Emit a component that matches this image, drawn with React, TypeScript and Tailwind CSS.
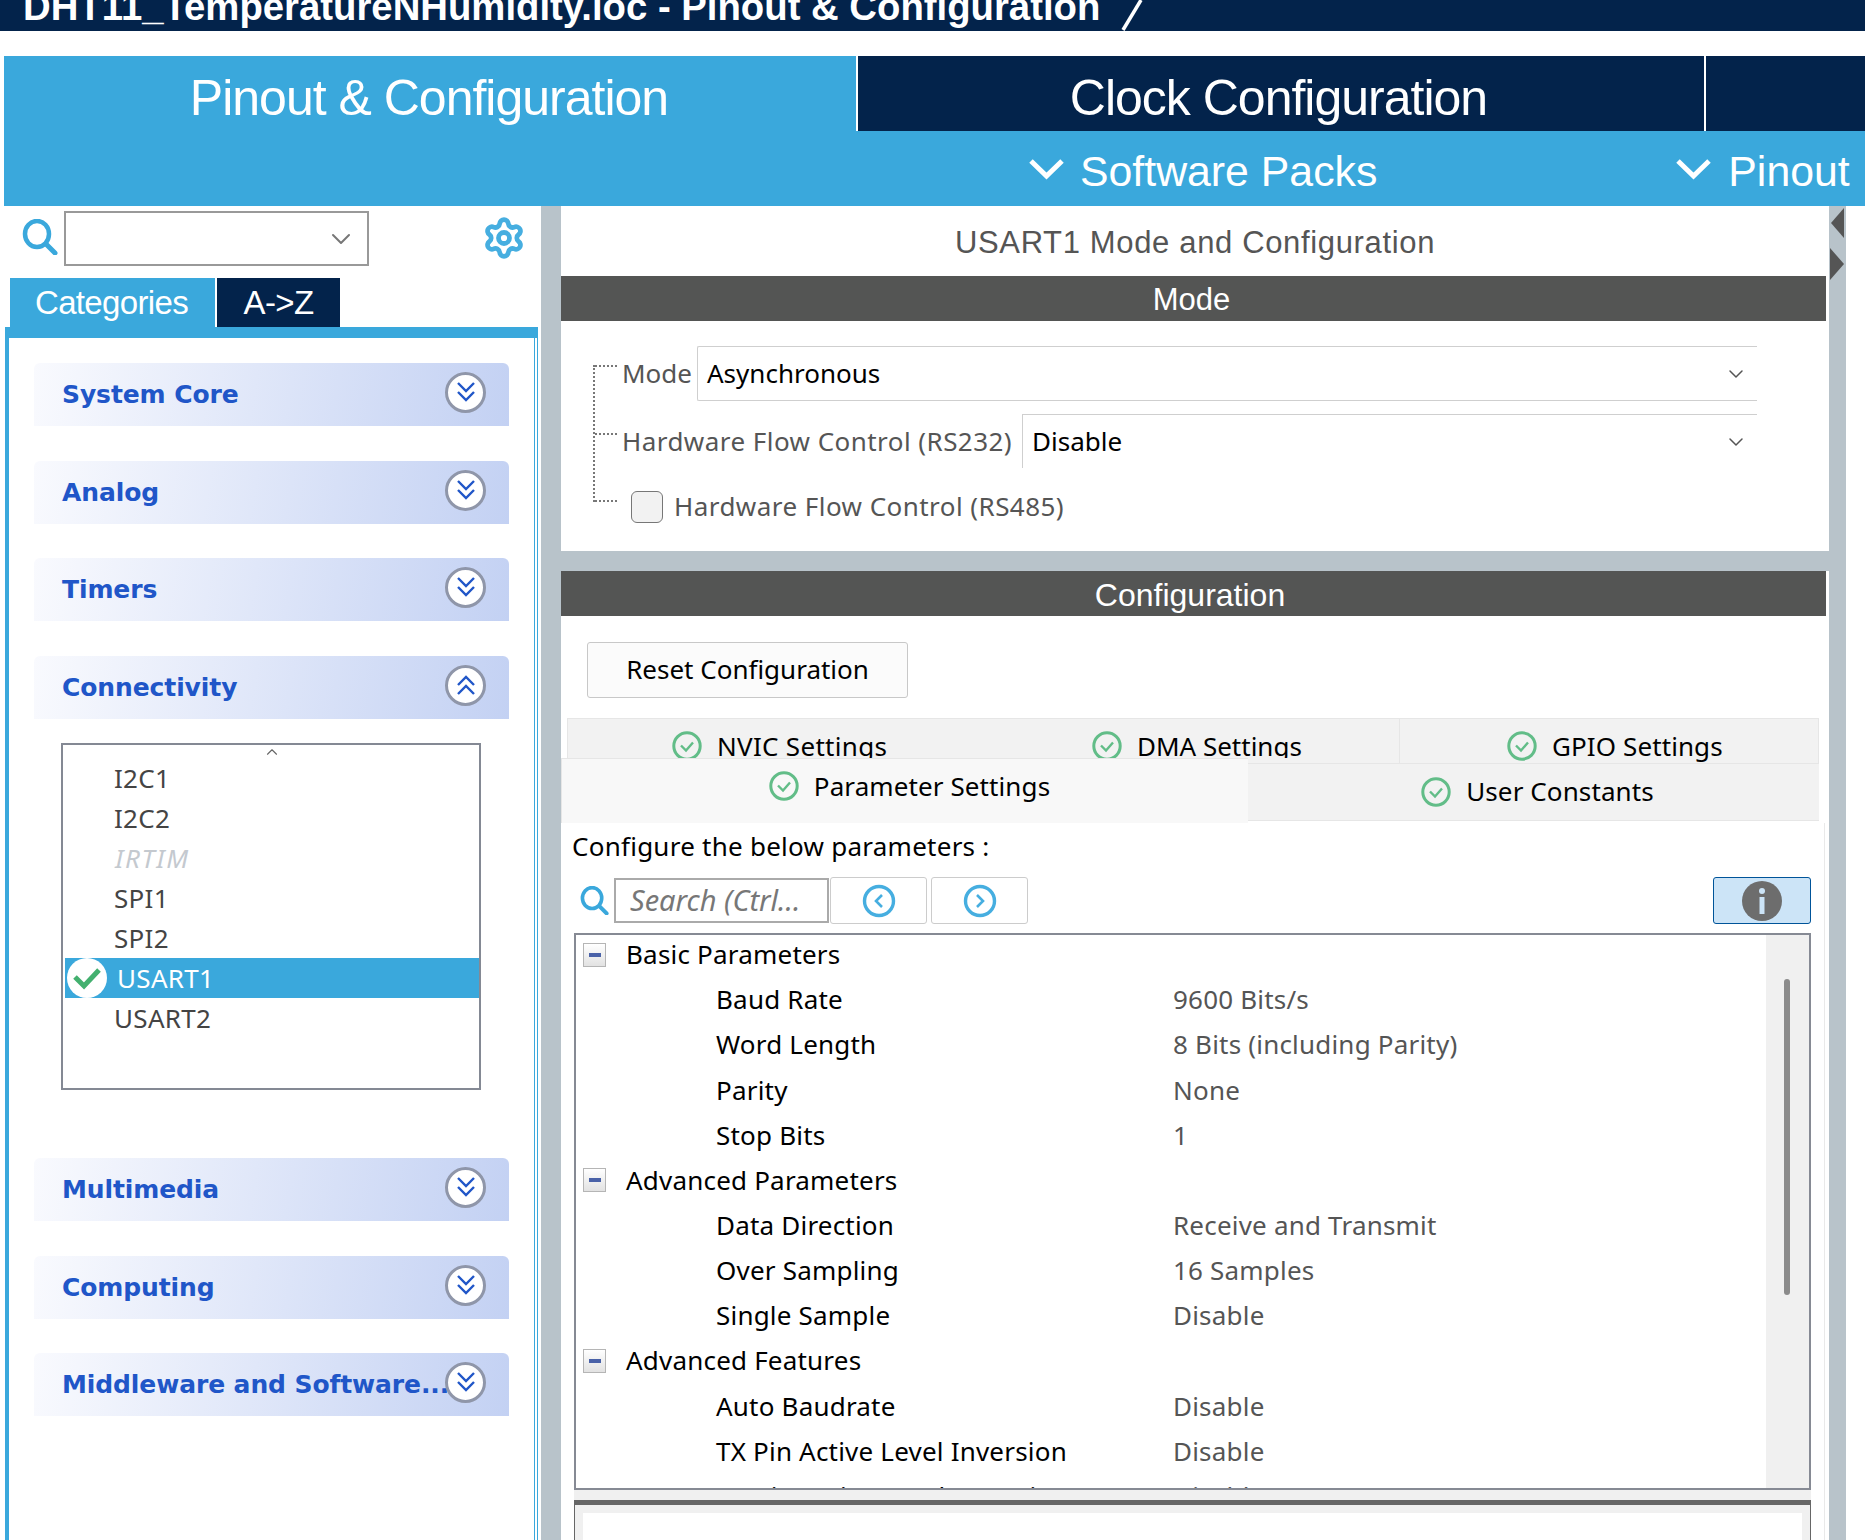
import React from 'react';
import { ChevronDown, ChevronUp, Settings } from 'lucide-react';

const uiFont = "font-['Noto_Sans','DejaVu_Sans',sans-serif]";

const SearchIcon: React.FC<{ size: number }> = ({ size }) => (
  <svg width={size} height={size} viewBox="0 0 36 36" fill="none" stroke="#3aa8dc" className="shrink-0">
    <ellipse cx="15" cy="15" rx="12" ry="13" strokeWidth="4.5" />
    <path d="M24 25l9 9" strokeWidth="5" strokeLinecap="round" />
  </svg>
);

const WideChevron: React.FC<{ className?: string }> = ({ className }) => (
  <svg width="35" height="22" viewBox="0 0 35 22" fill="none" stroke="#fff" strokeWidth="5" className={`shrink-0 ${className ?? ''}`}>
    <path d="M2 3l15.5 15L33 3" />
  </svg>
);

const DoubleChevron: React.FC<{ up?: boolean }> = ({ up }) => (
  <div className="relative -mt-[5px] w-[41px] h-[41px] rounded-full bg-white border-[3px] border-[#8f96a9] flex items-center justify-center shrink-0">
    <svg width="20" height="22" viewBox="0 0 20 22" fill="none" stroke="#2056c8" strokeWidth="2.4" className={up ? 'rotate-180' : ''}>
      <path d="M2 2l8 8 8-8" />
      <path d="M2 11l8 8 8-8" />
    </svg>
  </div>
);

const CheckCircle: React.FC = () => (
  <svg width="30" height="30" viewBox="0 0 30 30" fill="none" className="shrink-0">
    <circle cx="15" cy="15" r="13.2" stroke="#62bd88" strokeWidth="3" />
    <path d="M9 14.5l5 5 7-8" stroke="#62bd88" strokeWidth="2.4" />
  </svg>
);

const NavCircle: React.FC<{ right?: boolean }> = ({ right }) => (
  <svg width="34" height="34" viewBox="0 0 34 34" fill="none" stroke="#46aee0">
    <circle cx="17" cy="17" r="14.5" strokeWidth="3.4" />
    <path d={right ? 'M14 11l6 6-6 6' : 'M20 11l-6 6 6 6'} strokeWidth="2.6" />
  </svg>
);

const Section: React.FC<{ title: string; up?: boolean; className?: string }> = ({ title, up, className }) => (
  <div className={`h-[63px] ml-[25px] w-[475px] rounded-t-md bg-linear-[100deg] from-[#f9fafe] to-[#c3d1f3] flex items-center pl-[28px] pr-[23px] ${className ?? ''}`}>
    <div className="flex-1 min-w-0 font-['DejaVu_Sans',sans-serif] font-bold text-[25px] text-[#2056c8] whitespace-nowrap tracking-[-0.1px]">{title}</div>
    <DoubleChevron up={up} />
  </div>
);

const TreeRow: React.FC<{ label: string; value?: string }> = ({ label, value }) => (
  <div className="h-[45.17px] flex items-center shrink-0 text-[26px] whitespace-nowrap tracking-[0.2px]">
    {value === undefined ? (
      <>
        <div className="w-[23px] h-[24px] ml-[7px] mr-[20px] bg-linear-to-b from-white to-[#e2e2e2] border border-[#b5b5b5] flex items-center justify-center">
          <div className="w-[12px] h-[4px] bg-[#4a62a8]" />
        </div>
        <span className="text-black">{label}</span>
      </>
    ) : (
      <>
        <span className="ml-[140px] w-[457px] text-black">{label}</span>
        <span className="text-[#555]">{value}</span>
      </>
    )}
  </div>
);

const treeRows: { label: string; value?: string }[] = [
  { label: 'Basic Parameters' },
  { label: 'Baud Rate', value: '9600 Bits/s' },
  { label: 'Word Length', value: '8 Bits (including Parity)' },
  { label: 'Parity', value: 'None' },
  { label: 'Stop Bits', value: '1' },
  { label: 'Advanced Parameters' },
  { label: 'Data Direction', value: 'Receive and Transmit' },
  { label: 'Over Sampling', value: '16 Samples' },
  { label: 'Single Sample', value: 'Disable' },
  { label: 'Advanced Features' },
  { label: 'Auto Baudrate', value: 'Disable' },
  { label: 'TX Pin Active Level Inversion', value: 'Disable' },
  { label: 'RX Pin Active Level Inversion', value: 'Disable' },
];

const App: React.FC = () => {
  return (
    <div className={`w-[1865px] h-[1540px] overflow-hidden bg-white flex flex-col ${uiFont}`}>
      {/* title bar, cut by the top of the picture */}
      <div className="h-[31px] shrink-0 bg-[#03234b] overflow-hidden flex items-end pl-[23px] font-['Liberation_Sans',sans-serif] text-white">
        <span className="text-[38.3px] font-bold leading-[40px] mb-[4px] whitespace-nowrap">DHT11_TemperatureNHumidity.ioc - Pinout &amp; Configuration</span>
        <svg width="40" height="31" viewBox="0 0 40 31" className="ml-[21px] shrink-0">
          <path d="M2 30L20 0" stroke="#fff" strokeWidth="3.5" />
        </svg>
      </div>

      <div className="mt-[25px] ml-[4px] shrink-0 font-['Liberation_Sans',sans-serif] text-white">
        <div className="h-[75px] flex text-[50px] tracking-[-1px]">
          <div className="w-[852px] bg-[#3aa8dc] flex items-center justify-center pt-[10px] pr-[2px]">Pinout &amp; Configuration</div>
          <div className="w-[2px] bg-white" />
          <div className="w-[846px] bg-[#03234b] flex items-center justify-center pt-[10px] pr-[5px]">Clock Configuration</div>
          <div className="w-[2px] bg-white" />
          <div className="flex-1 bg-[#03234b]" />
        </div>
        <div className="h-[75px] bg-[#3aa8dc] flex items-center text-[42.8px] whitespace-nowrap">
          <WideChevron className="ml-[1025px]" />
          <span className="ml-[16px] pt-[6px]">Software Packs</span>
          <WideChevron className="ml-[299px]" />
          <span className="ml-[17px] pt-[6px]">Pinout</span>
        </div>
      </div>

      <div className="flex-1 flex min-h-0">
        {/* left panel */}
        <div className="w-[541px] shrink-0 flex flex-col">
          <div className="h-[72px] shrink-0 flex items-start">
            <div className="ml-[22px] mt-[13px]"><SearchIcon size={36} /></div>
            <div className="ml-[6px] mt-[5px] w-[305px] h-[55px] border-2 border-[#999] flex items-center justify-end pr-[10px]">
              <ChevronDown size={32} strokeWidth={1.5} className="text-[#777]" />
            </div>
            <Settings size={44} strokeWidth={2.6} className="ml-[113px] mt-[10px] text-[#46aee0]" />
          </div>
          <div className="h-[49px] shrink-0 flex ml-[10px] font-['Liberation_Sans',sans-serif] text-white text-[33px] tracking-[-0.65px]">
            <div className="w-[205px] bg-[#3aa8dc] flex items-center justify-center pr-[2px]">Categories</div>
            <div className="w-[2px]" />
            <div className="w-[123px] bg-[#03234b] flex items-center justify-center">A-&gt;Z</div>
          </div>
          <div className="flex-1 ml-[5px] mr-[3px] border-t-[11px] border-l-4 border-r border-[#3aa8dc] pr-[2px]">
            <div className="h-full border-r border-[#3aa8dc] pt-[25px]">
              <Section title="System Core" />
              <Section title="Analog" className="mt-[35px]" />
              <Section title="Timers" className="mt-[34px]" />
              <Section title="Connectivity" up className="mt-[35px]" />
              <div className="ml-[52px] mt-[24px] w-[420px] h-[347px] border-2 border-[#848994] pl-[2px] pr-0 text-[26px] text-[#444] tracking-[0.3px]">
                <div className="h-[13px] flex justify-center pt-[1px]">
                  <ChevronUp size={18} strokeWidth={1.5} className="text-[#666] -mt-[3px]" />
                </div>
                <div className="h-[40px] pl-[49px] flex items-center">I2C1</div>
                <div className="h-[40px] pl-[49px] flex items-center">I2C2</div>
                <div className="h-[40px] pl-[50px] flex items-center italic text-[#c4c9cf] tracking-[1.6px]">IRTIM</div>
                <div className="h-[40px] pl-[49px] flex items-center">SPI1</div>
                <div className="h-[40px] pl-[49px] flex items-center">SPI2</div>
                <div className="h-[40px] pl-[2px] flex items-center bg-[#3aa8dc] text-white">
                  <div className="w-[40px] h-[40px] rounded-full bg-white flex items-center justify-center mr-[10px]">
                    <svg width="30" height="24" viewBox="0 0 30 24" fill="none">
                      <path d="M3 11l9 9L27 4" stroke="#43b06f" strokeWidth="5" />
                    </svg>
                  </div>
                  USART1
                </div>
                <div className="h-[40px] pl-[49px] flex items-center">USART2</div>
              </div>
              <Section title="Multimedia" className="mt-[68px]" />
              <Section title="Computing" className="mt-[35px]" />
              <Section title="Middleware and Software..." className="mt-[34px]" />
            </div>
          </div>
        </div>

        <div className="w-[20px] shrink-0 bg-[#b8c3ca]" />

        {/* right panel */}
        <div className="w-[1268px] shrink-0 flex flex-col">
          <div className="h-[70px] shrink-0 flex items-center justify-center font-['Liberation_Sans',sans-serif] text-[31px] text-[#555] pt-[5px] tracking-[0.65px]">
            USART1 Mode and Configuration
          </div>
          <div className="h-[45px] shrink-0 w-[1265px] bg-[#545554] flex items-center justify-center font-['Liberation_Sans',sans-serif] text-white text-[31px] pt-[4px] pr-[4px]">Mode</div>

          <div className="h-[230px] shrink-0 flex text-[26px] text-[#555]">
            <div className="ml-[32px] mt-[44px] w-[24px] h-[137px] border-l-2 border-dotted border-[#777] flex flex-col justify-between">
              <div className="border-t-2 border-dotted border-[#777]" />
              <div className="border-t-2 border-dotted border-[#777]" />
              <div className="border-t-2 border-dotted border-[#777]" />
            </div>
            <div className="flex-1 ml-[5px] pt-[25px]">
              <div className="h-[55px] flex items-center">
                <span className="w-[75px]">Mode</span>
                <div className="w-[1060px] h-full border-y border-l border-[#cfcfcf] rounded-l-[2px] flex items-center justify-between pl-[9px] pr-[9px] text-black">
                  Asynchronous
                  <ChevronDown size={24} strokeWidth={1.5} className="text-[#555]" />
                </div>
              </div>
              <div className="h-[54px] mt-[13px] flex items-center">
                <span className="w-[400px] whitespace-nowrap tracking-[0.45px]">Hardware Flow Control (RS232)</span>
                <div className="w-[735px] h-full border-t border-l border-[#cfcfcf] flex items-center justify-between pl-[9px] pr-[9px] text-black">
                  Disable
                  <ChevronDown size={24} strokeWidth={1.5} className="text-[#555]" />
                </div>
              </div>
              <div className="h-[32px] mt-[23px] ml-[9px] flex items-center tracking-[0.45px]">
                <div className="w-[32px] h-[32px] rounded-[6px] border border-[#777] bg-[#f2f2f2] mr-[11px]" />
                <span className="-mt-[2px]">Hardware Flow Control (RS485)</span>
              </div>
            </div>
          </div>

          <div className="h-[20px] shrink-0 bg-[#b8c3ca]" />
          <div className="h-[45px] shrink-0 w-[1265px] bg-[#545554] flex items-center justify-center font-['Liberation_Sans',sans-serif] text-white text-[32px] pt-[3px] pr-[7px]">Configuration</div>

          <div className="ml-[26px] mt-[26px] w-[321px] h-[56px] shrink-0 rounded-[3px] border border-[#c8c8c8] bg-[#fbfbfb] flex items-center justify-center text-[26px] text-black pb-[2px]">Reset Configuration</div>

          {/* settings tabs */}
          <div className="mt-[20px] ml-[6px] w-[1252px] h-[46px] shrink-0 flex text-[26px] text-black bg-[#f2f2f2] border border-[#e6e6e6]">
            <div className="w-[419px] pl-[104px] flex items-start pt-[12px] gap-[15px] overflow-hidden h-[39px]"><CheckCircle /><span className="-mt-[4px] tracking-[0.3px]">NVIC Settings</span></div>
            <div className="w-[412px] pl-[105px] flex items-start pt-[12px] gap-[15px] overflow-hidden h-[39px]"><CheckCircle /><span className="-mt-[4px]">DMA Settings</span></div>
            <div className="flex-1 border-l border-[#e6e6e6] pl-[107px] flex items-start pt-[12px] gap-[15px]"><CheckCircle /><span className="-mt-[4px] tracking-[0.1px]">GPIO Settings</span></div>
          </div>
          <div className="-mt-[6px] flex h-[65px] shrink-0 text-[26px] text-black">
            <div className="w-[687px] h-[65px] bg-[#f8f8f8] border-t border-l border-[#e6e6e6] flex items-center justify-center gap-[15px] pb-[10px] pl-[9px] tracking-[0.1px]">
              <CheckCircle />Parameter Settings
            </div>
            <div className="w-[571px] h-[57px] mt-[6px] bg-[#f2f2f2] border-b border-[#e6e6e6] flex items-center justify-center gap-[15px] pl-[8px] pb-[1px] tracking-[0.1px]">
              <CheckCircle />User Constants
            </div>
          </div>

          <div className="flex-1 min-h-0 w-[1264px] border-r border-[#e9e9e9] flex flex-col">
            <div className="h-[46px] mb-[2px] shrink-0 pl-[11px] flex items-center text-[26px] text-black tracking-[0.25px]">Configure the below parameters :</div>
            <div className="h-[47px] mt-[6px] shrink-0 flex items-center">
              <div className="ml-[19px]"><SearchIcon size={29} /></div>
              <div className="ml-[5px] w-[215px] h-[45px] border-2 border-[#aaa] flex items-center pl-[14px] pb-[2px] italic text-[29px] text-[#777] whitespace-nowrap overflow-hidden">Search (Ctrl...</div>
              <div className="ml-[1px] w-[97px] h-[47px] border border-[#ccc] rounded-[3px] flex items-center justify-center"><NavCircle /></div>
              <div className="ml-[4px] w-[97px] h-[47px] border border-[#ccc] rounded-[3px] flex items-center justify-center"><NavCircle right /></div>
              <div className="ml-[685px] w-[98px] h-[47px] rounded-[3px] border border-[#005499] bg-[#cce4f7] flex items-center justify-center">
                <svg width="42" height="42" viewBox="0 0 42 42">
                  <circle cx="21" cy="21" r="20" fill="#6d6d6d" />
                  <circle cx="21" cy="11" r="3" fill="#cce4f7" />
                  <rect x="18.5" y="17" width="5" height="17" fill="#cce4f7" />
                </svg>
              </div>
            </div>
            <div className="ml-[13px] mt-[9px] w-[1237px] h-[557px] shrink-0 border-2 border-[#868a94] flex overflow-hidden">
              <div className="flex-1 flex flex-col overflow-hidden -mt-[3px]">
                {treeRows.map((row) => <TreeRow key={row.label} label={row.label} value={row.value} />)}
              </div>
              <div className="w-[43px] shrink-0 bg-[#f0f0f0] pl-[18px] pt-[44px]">
                <div className="w-[6px] h-[316px] rounded-[3px] bg-[#8b8b8b]" />
              </div>
            </div>
            <div className="ml-[13px] w-[1237px] h-[10px] shrink-0 bg-[#f0f0f0]" />
            <div className="ml-[13px] w-[1237px] flex-1 min-h-0 border-t-[5px] border-x border-[#666] bg-[#f0f0f0] px-[8px] pt-[8px]">
              <div className="h-full bg-white" />
            </div>
          </div>
        </div>

        {/* second splitter with its collapse arrows */}
        <div className="w-[17px] shrink-0 bg-[#b8c3ca] flex flex-col items-center pt-[2px] gap-[10px]">
          <svg width="17" height="30" viewBox="0 0 17 30"><path d="M15 0v30L2 15z" fill="#555" /></svg>
          <svg width="17" height="32" viewBox="0 0 17 32"><path d="M1 0v32L15 16z" fill="#555" /></svg>
        </div>
      </div>
    </div>
  );
};

export default App;
